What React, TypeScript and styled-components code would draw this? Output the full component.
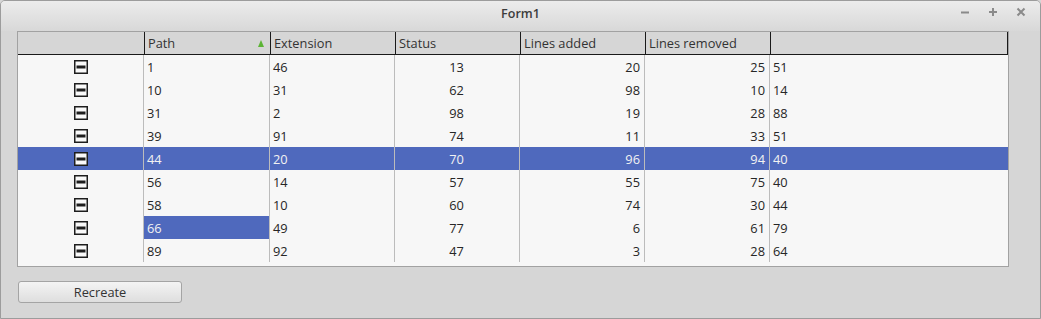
import styled, { createGlobalStyle, css } from "styled-components";

const GlobalStyle = createGlobalStyle`
  html, body {
    margin: 0;
    padding: 0;
    background: #d6d6d6;
  }
  body {
    font-family: "Open Sans", "DejaVu Sans", sans-serif;
  }
`;

type Align = "left" | "center" | "right";

const columns: { title: string; width: number; align: Align }[] = [
  { title: "Path", width: 126, align: "left" },
  { title: "Extension", width: 125, align: "left" },
  { title: "Status", width: 125, align: "center" },
  { title: "Lines added", width: 125, align: "right" },
  { title: "Lines removed", width: 125, align: "right" },
];

const rows: number[][] = [
  [1, 46, 13, 20, 25, 51],
  [10, 31, 62, 98, 10, 14],
  [31, 2, 98, 19, 28, 88],
  [39, 91, 74, 11, 33, 51],
  [44, 20, 70, 96, 94, 40],
  [56, 14, 57, 55, 75, 40],
  [58, 10, 60, 74, 30, 44],
  [66, 49, 77, 6, 61, 79],
  [89, 92, 47, 3, 28, 64],
];

const selectedRow = 4;
const selectedCell = { row: 7, col: 0 };

const Window = styled.div`
  width: 1041px;
  height: 319px;
  box-sizing: border-box;
  border: 1px solid #9c9c9c;
  border-radius: 5px 5px 0 0;
  background: #d6d6d6;
  display: flex;
  flex-direction: column;
  overflow: hidden;
`;

const TitleBar = styled.div`
  height: 30px;
  flex-shrink: 0;
  display: flex;
  align-items: center;
  justify-content: center;
  position: relative;
  background: linear-gradient(#ececec, #d8d8d8);
`;

const Title = styled.span`
  font-size: 12.5px;
  font-weight: 600;
  color: #3c3c3c;
  margin-top: -5px;
`;

const Controls = styled.div`
  position: absolute;
  right: 12px;
  top: 4px;
  display: flex;
  gap: 14px;
`;

const ControlButton = styled.span`
  width: 14px;
  height: 14px;
  display: flex;
  align-items: center;
  justify-content: center;
`;

const Body = styled.div`
  flex: 1;
  display: flex;
  flex-direction: column;
  padding: 0 31px 0 16px;
  gap: 14px;
`;

const Table = styled.div`
  height: 236px;
  box-sizing: border-box;
  border: 1px solid #a2a2a2;
  background: #f7f7f7;
  display: flex;
  flex-direction: column;
`;

const HeaderRow = styled.div`
  height: 22px;
  display: flex;
  background: #d6d6d6;
  border-bottom: 1px solid #1a1a1a;
`;

const HeaderCell = styled.div<{ $w?: number }>`
  ${(p) => (p.$w ? css`width: ${p.$w}px;` : css`flex: 1;`)}
  box-sizing: border-box;
  border-right: 1px solid #1a1a1a;
  padding: 0 3px;
  display: flex;
  align-items: center;
  justify-content: space-between;
  font-size: 12.8px;
  color: #333;
`;

const SortArrow = styled.span`
  width: 0;
  height: 0;
  border-left: 3.5px solid transparent;
  border-right: 3.5px solid transparent;
  border-bottom: 7px solid #5cb435;
  margin-right: 3px;
`;

const Row = styled.div<{ $selected: boolean }>`
  height: 23px;
  display: flex;
  background: ${(p) => (p.$selected ? "#4f69bd" : "transparent")};
`;

const RowHeader = styled.div`
  width: 126px;
  box-sizing: border-box;
  display: flex;
  align-items: center;
  justify-content: center;
  border-right: 1px solid #bcbcbc;
`;

const Cell = styled.div<{ $w?: number; $align: Align; $selected: boolean }>`
  ${(p) => (p.$w ? css`width: ${p.$w}px;` : css`flex: 1;`)}
  box-sizing: border-box;
  border-right: ${(p) => (p.$w ? "1px solid #bcbcbc" : "none")};
  padding: 0 4px 0 3px;
  display: flex;
  align-items: center;
  justify-content: ${(p) =>
    p.$align === "left" ? "flex-start" : p.$align === "right" ? "flex-end" : "center"};
  font-size: 12.8px;
  color: ${(p) => (p.$selected ? "#f2f2f2" : "#262626")};
  background: ${(p) => (p.$selected ? "#4f69bd" : "transparent")};
`;

const ButtonRow = styled.div`
  display: flex;
`;

const Button = styled.button`
  width: 164px;
  height: 22px;
  box-sizing: border-box;
  border: 1px solid #a4a4a4;
  border-radius: 3px;
  background: linear-gradient(#f4f4f4, #dedede);
  font-family: "Open Sans", sans-serif;
  font-size: 12.8px;
  color: #333;
  padding: 0;
  margin-left: 1px;
`;

const RowCheck = () => (
  <svg width="14" height="14" viewBox="0 0 14 14">
    <rect x="0.75" y="0.75" width="12.5" height="12.5" fill="#fafafa" stroke="#1e1e1e" strokeWidth="1.5" />
    <rect x="2.5" y="5.5" width="9" height="3" fill="#1e1e1e" />
  </svg>
);

const App = () => (
  <>
    <GlobalStyle />
    <Window>
      <TitleBar>
        <Title>Form1</Title>
        <Controls>
          <ControlButton>
            <svg width="10" height="10" viewBox="0 0 10 10">
              <path d="M1 5.5h8" stroke="#8a8a8a" strokeWidth="2" />
            </svg>
          </ControlButton>
          <ControlButton>
            <svg width="10" height="10" viewBox="0 0 10 10">
              <path d="M1 5h8M5 1v8" stroke="#8a8a8a" strokeWidth="2" />
            </svg>
          </ControlButton>
          <ControlButton>
            <svg width="10" height="10" viewBox="0 0 10 10">
              <path d="M1.5 1.5l7 7M8.5 1.5l-7 7" stroke="#8a8a8a" strokeWidth="2" />
            </svg>
          </ControlButton>
        </Controls>
      </TitleBar>
      <Body>
        <Table>
          <HeaderRow>
            <HeaderCell $w={127} />
            {columns.map((c, i) => (
              <HeaderCell key={c.title} $w={c.width}>
                {c.title}
                {i === 0 && <SortArrow />}
              </HeaderCell>
            ))}
            <HeaderCell />
          </HeaderRow>
          {rows.map((r, ri) => (
            <Row key={ri} $selected={ri === selectedRow}>
              <RowHeader>
                <RowCheck />
              </RowHeader>
              {columns.map((c, ci) => (
                <Cell
                  key={c.title}
                  $w={c.width}
                  $align={c.align}
                  $selected={ri === selectedRow || (ri === selectedCell.row && ci === selectedCell.col)}
                >
                  {r[ci]}
                </Cell>
              ))}
              <Cell $align="left" $selected={ri === selectedRow}>
                {r[5]}
              </Cell>
            </Row>
          ))}
        </Table>
        <ButtonRow>
          <Button>Recreate</Button>
        </ButtonRow>
      </Body>
    </Window>
  </>
);

export default App;
